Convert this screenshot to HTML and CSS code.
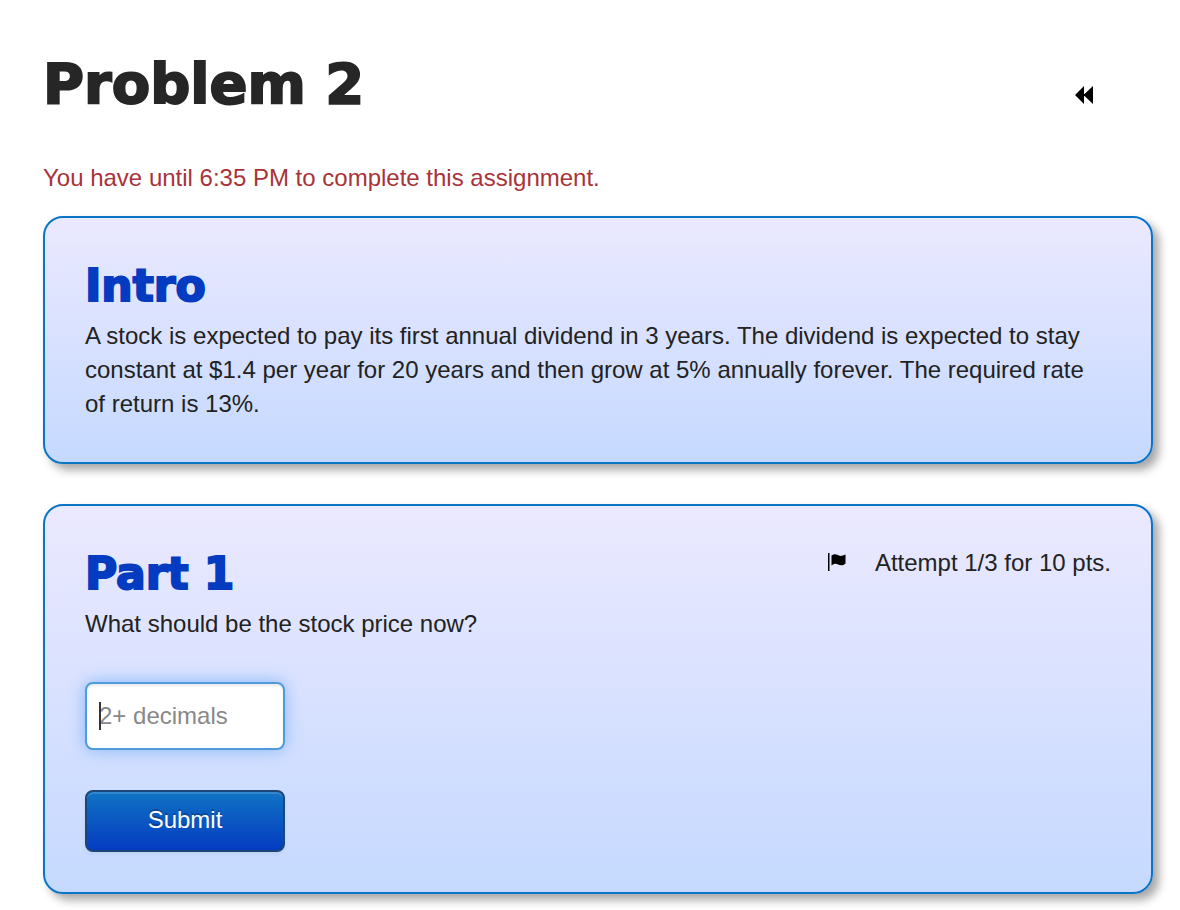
FILE: index.html
```html
<!DOCTYPE html>
<html lang="en">
<head>
    <title>Problem 2</title>
    <meta charset="UTF-8">
    <link rel="stylesheet" href="styles.css">
</head>
<body>
    <div class="header">
        <h1>Problem 2</h1>
        <a href="#" class="back" aria-label="Previous problem">
            <svg width="20" height="20" viewBox="0 0 20 20"><path d="M0 10L9 1V9L9.500 9L18 1V19L9.500 11H9V19Z"/></svg>
        </a>
    </div>

    <p class="deadline">You have until 6:35 PM to complete this assignment.</p>

    <div class="card">
        <h2>Intro</h2>
        <p class="description">A stock is expected to pay its first annual dividend in 3 years. The dividend is expected to stay constant at $1.4 per year for 20 years and then grow at 5% annually forever. The required rate of return is 13%.</p>
    </div>

    <div class="card">
        <div class="card-header">
            <h2>Part 1</h2>
            <div class="attempt">
                <svg width="20" height="20" viewBox="0 0 20 20"><path d="M1 0H2.500V18H1ZM4.500 2.500C8 0 10 1.500 12 2.500C14 3.500 16 2.500 18.500 1.500V10.500C16 13 13 12.500 11 11.500C9 10.500 7 10.500 4.500 12.500Z"/></svg>
                <span>Attempt 1/3 for 10 pts.</span>
            </div>
        </div>
        <form>
            <label for="answer">What should be the stock price now?</label>
            <div class="answer">
                <input type="text" id="answer" name="answer" placeholder="2+ decimals" autocomplete="off">
                <span class="caret"></span>
            </div>
            <button type="submit">Submit</button>
        </form>
    </div>
</body>
</html>
```
FILE: styles.css
```css
* {
    box-sizing: border-box;
}
body {
    margin: 0;
    padding: 43px 27px 16px 43px;
    background: #fff;
    color: #222;
    font-family: "Helvetica Neue", "Liberation Sans", Arial, sans-serif;
    font-size: 24px;
    line-height: 34px;
}
h1, h2 {
    margin: 0;
    font-family: "Arial Black", "DejaVu Sans", sans-serif;
    font-weight: 900;
    -webkit-text-stroke: 2px currentColor;
}
h1 {
    color: #262626;
    font-size: 56px;
    line-height: 82px;
}
h2 {
    margin-bottom: 5px;
    color: #043bc0;
    font-size: 44px;
    line-height: 56px;
}
p {
    margin: 0;
}
.header {
    display: flex;
    justify-content: space-between;
    align-items: center;
    padding-right: 58px;
}
.back {
    display: flex;
    padding-top: 22px;
}
.deadline {
    margin: 36px 0 21px;
    color: #a93338;
}
.card {
    margin-bottom: 40px;
    padding: 40px;
    border: 2px solid #0b74c4;
    border-radius: 20px;
    background: linear-gradient(#ebe9ff, #c5d9ff);
    box-shadow: 6px 6px 10px rgba(0, 0, 0, 0.35);
}
.card:last-child {
    margin-bottom: 0;
}
.description {
    padding: 0 12px 1px 0;
}
.card-header {
    display: flex;
    justify-content: space-between;
    align-items: flex-start;
}
.attempt {
    display: flex;
    align-items: center;
    gap: 28px;
}
label {
    display: block;
}
.answer {
    position: relative;
    width: 200px;
    margin: 41px 0 40px;
}
input {
    display: block;
    width: 100%;
    height: 68px;
    padding: 0 12px;
    border: 2px solid #4f9be0;
    border-radius: 8px;
    outline: none;
    background: #fff;
    color: #444;
    font: inherit;
    box-shadow: inset 0 2px 2px rgba(0, 0, 0, 0.08), 0 0 16px rgba(82, 158, 240, 0.6);
}
input::placeholder {
    color: #888;
    opacity: 1;
}
.caret {
    position: absolute;
    top: 20px;
    left: 14px;
    width: 2px;
    height: 28px;
    background: #333;
}
button {
    display: block;
    width: 200px;
    height: 62px;
    padding: 0 0 3px;
    border: 2px solid #1c4677;
    border-radius: 8px;
    background: linear-gradient(#1173c4, #043bc0);
    box-shadow: inset 0 2px 0 rgba(255, 255, 255, 0.15), 0 2px 4px rgba(0, 0, 0, 0.05);
    color: #fff;
    font: inherit;
    text-shadow: 0 -2px 0 rgba(0, 0, 0, 0.25);
    cursor: pointer;
}
button:hover {
    background: #043bc0;
}
```
